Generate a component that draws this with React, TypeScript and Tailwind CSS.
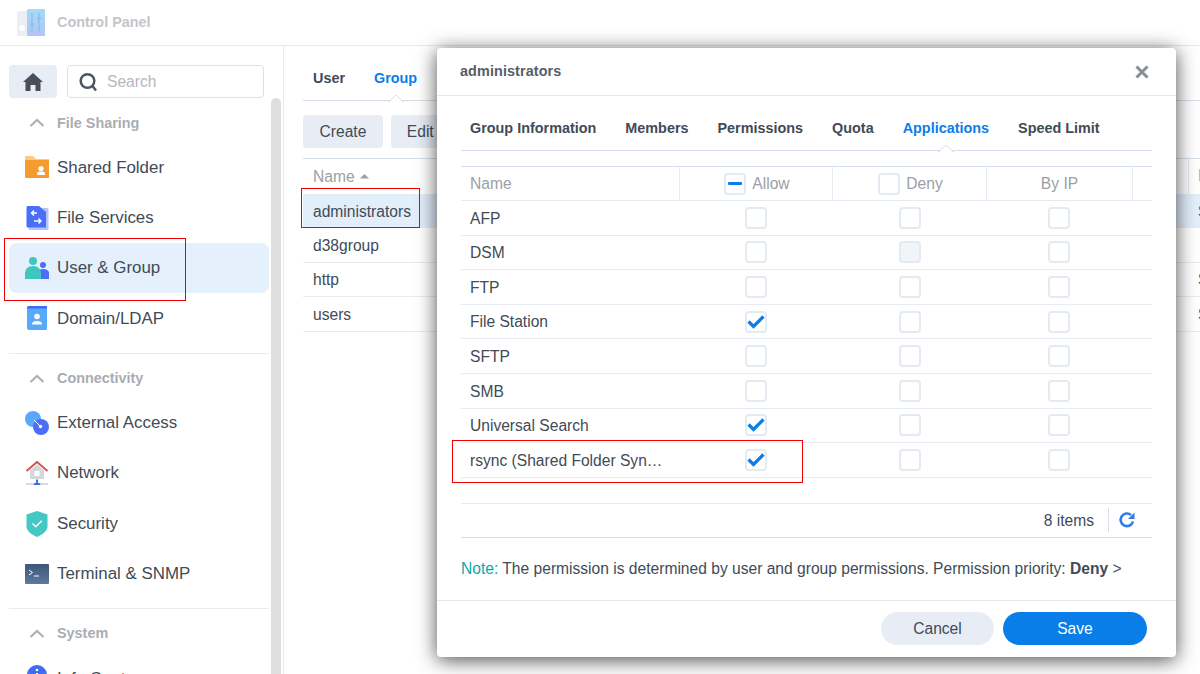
import React from 'react';

const font = { fontFamily: '"Liberation Sans", Arial, sans-serif' };

const TabCaret = () => (
  <svg className="absolute bottom-[-1px] left-1/2 -translate-x-1/2" width="16" height="8" viewBox="0 0 16 8">
    <path d="M0 7.5h1L8 1l7 6.5h1V8H0z" fill="#fff" />
    <path d="M0 7.5h1L8 1l7 6.5h1" fill="none" stroke="#d5dfe9" />
  </svg>
);

const Chevron = () => (
  <svg width="16" height="16" viewBox="0 0 16 16" fill="none" stroke="#adb1b7" strokeWidth="2.2">
    <path d="M1.5 11 8 5l6.5 6" />
  </svg>
);

const FolderIcon = () => (
  <svg width="24" height="24" viewBox="0 0 24 24">
    <path d="M0 2.5C0 1.7.5 1 1.5 1H8l3 3h13v3H0z" fill="#fbc98a" />
    <path d="M0 5h24v18H1a1 1 0 0 1-1-1z" fill="#f59b2f" />
    <circle cx="16" cy="13.5" r="2.6" fill="#fff" />
    <path d="M12 18.5c0-1.4 1.5-2 4-2s4 .6 4 2V20h-8z" fill="#fff" />
  </svg>
);

const FileServicesIcon = () => (
  <svg width="24" height="24" viewBox="0 0 24 24">
    <rect x="3.5" y="2" width="20" height="22" rx="1.5" fill="#b4c4fb" />
    <path d="M1.5 1.5C1.5.7 2 0 3 0h11l7 6v15.5H3a1.5 1.5 0 0 1-1.500-1.500z" fill="#4b6ef8" />
    <path d="M12 7H6.500m2.500-2.500L6.500 7 9 9.500M9 15h7m-2.500-2.500L16 15l-2.500 2.500" stroke="#fff" strokeWidth="1.4" fill="none" />
  </svg>
);

const UsersIcon = () => (
  <svg width="24" height="24" viewBox="0 0 24 24">
    <circle cx="18" cy="9" r="3" fill="#4b6ef8" />
    <path d="M13 23v-6c0-2.500 2-4 5-4s6 1.500 6 4v6z" fill="#4b6ef8" />
    <circle cx="8" cy="5" r="4" fill="#41c6bd" />
    <path d="M0 23v-5c0-5 3-8 8-8s8 3 8 8v5z" fill="#41c6bd" />
  </svg>
);

const DomainIcon = () => (
  <svg width="24" height="24" viewBox="0 0 24 24">
    <path d="M2 1.500C2 .7 2.700 0 3.500 0H22v4H2z" fill="#3f6df0" />
    <path d="M2 2.500h18.500c1 0 1.500.6 1.500 1.500v18.500c0 .9-.6 1.500-1.500 1.500H4a2 2 0 0 1-2-2z" fill="#58a9fb" />
    <circle cx="12" cy="10.500" r="2.800" fill="#fff" />
    <path d="M7 18c0-2 2-3 5-3s5 1 5 3v.5H7z" fill="#fff" />
  </svg>
);

const ExternalIcon = () => (
  <svg width="24" height="24" viewBox="0 0 24 24">
    <circle cx="8" cy="8" r="8" fill="#58a9fb" />
    <circle cx="16" cy="16" r="8" fill="#4b6ef8" />
    <path d="M9 9l6.500 6.500" stroke="#fff" strokeWidth="1" />
    <circle cx="15.500" cy="15.500" r="1.700" fill="#fff" />
  </svg>
);

const NetworkIcon = () => (
  <svg width="24" height="24" viewBox="0 0 24 24">
    <path d="M5 9.500 12 3.500l7 6v8.500H5z" fill="#d5d7da" />
    <path d="M1.500 10 12 1l10.500 9" fill="none" stroke="#d5564e" strokeWidth="2" />
    <rect x="9.500" y="10" width="5" height="5" fill="#fff" />
    <rect x="1" y="22" width="22" height="2" fill="#d9dce0" />
    <path d="M12 18.500V22" stroke="#3f6df0" strokeWidth="2" />
    <path d="M8.500 24l1-2h5l1 2z" fill="#3f6df0" />
  </svg>
);

const ShieldIcon = () => (
  <svg width="24" height="26" viewBox="0 0 24 26">
    <path d="M12 0l10.500 3.500v12c0 4-4.500 8-10.500 10.500C6 23.500 1.500 19.500 1.500 15.500v-12z" fill="#43c8c3" />
    <path d="M7.500 12.500l3.300 3.300 6-6" fill="none" stroke="#fff" strokeWidth="1.500" />
  </svg>
);

const TerminalIcon = () => (
  <svg width="24" height="20" viewBox="0 0 24 20">
    <defs>
      <linearGradient id="term" x1="0" y1="0" x2="0" y2="1">
        <stop offset="0" stopColor="#3d5578" />
        <stop offset="1" stopColor="#5f7a9f" />
      </linearGradient>
    </defs>
    <rect width="24" height="20" rx="1" fill="url(#term)" />
    <path d="M4 6l3.500 2.500L4 11M9 12h5" fill="none" stroke="#fff" strokeWidth="1" />
  </svg>
);

const InfoIcon = () => (
  <svg className="overflow-visible" width="24" height="24" viewBox="0 3 24 24">
    <circle cx="12" cy="12" r="10" fill="#3f6df0" />
    <rect x="11" y="10" width="2" height="7" fill="#fff" />
    <circle cx="12" cy="7" r="1.300" fill="#fff" />
  </svg>
);

const sections = [
  {
    title: 'File Sharing',
    items: [
      { label: 'Shared Folder', icon: <FolderIcon /> },
      { label: 'File Services', icon: <FileServicesIcon /> },
      { label: 'User & Group', icon: <UsersIcon />, active: true },
      { label: 'Domain/LDAP', icon: <DomainIcon /> },
    ],
  },
  {
    title: 'Connectivity',
    items: [
      { label: 'External Access', icon: <ExternalIcon /> },
      { label: 'Network', icon: <NetworkIcon /> },
      { label: 'Security', icon: <ShieldIcon /> },
      { label: 'Terminal & SNMP', icon: <TerminalIcon /> },
    ],
  },
  {
    title: 'System',
    items: [{ label: 'Info Center', icon: <InfoIcon /> }],
  },
];

const groups = [
  { name: 'administrators', desc: 'System default group', selected: true },
  { name: 'd38group', desc: '' },
  { name: 'http', desc: 'System default group' },
  { name: 'users', desc: 'System default group' },
];

const apps = [
  { name: 'AFP' },
  { name: 'DSM', denyDisabled: true },
  { name: 'FTP' },
  { name: 'File Station', allow: true },
  { name: 'SFTP' },
  { name: 'SMB' },
  { name: 'Universal Search', allow: true },
  { name: 'rsync (Shared Folder Sync, LUN Backup)', allow: true },
];

const Checkbox = ({ checked, disabled, mixed }: { checked?: boolean; disabled?: boolean; mixed?: boolean }) => (
  <span
    className={`flex h-[22px] w-[22px] shrink-0 items-center justify-center rounded-[4px] border-2 border-[#e4eaf1] ${
      disabled ? 'bg-[#f1f4f8]' : 'bg-white'
    }`}
  >
    {checked && (
      <svg width="18" height="14" viewBox="0 0 18 14" fill="none" stroke="#0a7ee8" strokeWidth="3.200">
        <path d="M1.500 6.500 6.500 11.500 16.500 1.500" />
      </svg>
    )}
    {mixed && <span className="h-[3px] w-[14px] rounded-[1px] bg-[#0a7ee8]" />}
  </span>
);

const Sidebar = () => (
  <aside className="relative flex h-full w-[284px] shrink-0 flex-col overflow-hidden border-r border-[#e6eaf0]">
    <div className="flex h-[52px] shrink-0 gap-[10px] pl-[9px] pt-[19px]">
      <button className="flex h-[33px] w-[48px] items-center justify-center rounded-[4px] bg-[#e8edf5]">
        <svg width="20" height="18" viewBox="0 0 20 18" fill="#474f59">
          <path d="M10 0 20 9h-2.500v9h-5v-6h-5v6h-5V9H0z" />
        </svg>
      </button>
      <div className="flex h-[33px] w-[197px] items-center gap-[10px] rounded-[4px] border border-[#d8e0ea] pl-[11px]">
        <svg width="18" height="20" viewBox="0 0 18 20" fill="none" stroke="#4d5661" strokeWidth="2.500">
          <circle cx="8.500" cy="9" r="6.800" />
          <path d="M13.500 14 17 18.500" />
        </svg>
        <span className="text-[15.6px] text-[#b4b8be]">Search</span>
      </div>
    </div>
    {sections.map((section, i) => (
      <div key={section.title} className={i > 0 ? 'mt-[9px] mr-[14px] ml-[9px] border-t border-[#e8ecf2]' : 'mr-[14px] ml-[9px]'}>
        <div className="flex h-[44px] items-center gap-[12px] pl-[20px] pt-[6px]">
          <Chevron />
          <span className={`text-[14.4px] font-bold text-[#a9adb3] ${i === 0 ? 'mt-[1px]' : ''}`}>{section.title}</span>
        </div>
        {section.items.map(item => (
          <div
            key={item.label}
            className={`flex h-[50.4px] items-center gap-[8px] rounded-[8px] pl-[16px] text-[16.9px] text-[#414b57] ${
              item.active ? 'bg-[#e4f0fc]' : ''
            }`}
          >
            <span className="flex w-[24px] items-center justify-center">{item.icon}</span>
            {item.label}
          </div>
        ))}
      </div>
    ))}
    <div className="absolute bottom-0 right-[2px] top-[52px] w-[10px] rounded-t-[5px] bg-[#dedede]" />
  </aside>
);

const GroupPage = () => (
  <main className="min-w-0 flex-1 overflow-hidden pl-[19px] pt-[20px] text-[15.6px] text-[#414b57]">
    <div className="flex h-[35px] w-[1000px] gap-[29px] border-b border-[#d5dfe9] pl-[10px] text-[14.4px] font-bold leading-[24px]">
      <span>User</span>
      <span className="relative h-[35px] text-[#0a7ee8]">
        Group
        <TabCaret />
      </span>
    </div>
    <div className="mt-[14px] flex gap-[8px]">
      <button className="h-[33px] rounded-[4px] bg-[#e8edf5] px-[16.500px]">Create</button>
      <button className="h-[33px] rounded-[4px] bg-[#e8edf5] px-[16px]">Edit</button>
    </div>
    <div className="mt-[10px] flex h-[36px] w-[1000px] items-center border-t border-[#d5dfe9] text-[#9aa0a7]">
      <span className="flex flex-1 items-center gap-[5px] pl-[10px]">
        Name
        <svg width="9" height="5" viewBox="0 0 9 5" fill="#9aa0a7">
          <path d="M4.500 0 9 4.500H0z" />
        </svg>
      </span>
      <span className="h-full w-[115px] border-l border-[#e4eaf1] pl-[9px] leading-[34px]">Description</span>
    </div>
    {groups.map(g => (
      <div
        key={g.name}
        className={`flex h-[34.4px] w-[1000px] items-center border-b border-[#e8ecf2] pt-[1px] ${g.selected ? 'bg-[#e3eefb]' : ''}`}
      >
        <span className="flex-1 pl-[10px]">{g.name}</span>
        <span className="w-[115px] whitespace-nowrap pl-[10px]">{g.desc}</span>
      </div>
    ))}
  </main>
);

const GroupDialog = () => (
  <div className="absolute left-[437px] top-[48px] flex h-[609px] w-[739px] flex-col rounded-[4px] bg-white text-[15.6px] text-[#414b57] shadow-[0_3px_20px_rgba(0,0,0,0.7)]">
    <div className="flex h-[48px] shrink-0 items-center justify-between border-b border-[#e4e8ee] pl-[23px] pr-[27px] pt-[1px]">
      <span className="text-[14.4px] font-bold tracking-[0.1px] text-[#565e68]">administrators</span>
      <svg width="14" height="14" viewBox="0 0 14 14" stroke="#888e96" strokeWidth="3">
        <path d="M1.500 1.500l11 11m0-11-11 11" />
      </svg>
    </div>
    <div className="flex flex-1 flex-col px-[24px]">
      <div className="flex h-[55px] shrink-0 gap-[29px] border-b border-[#d5dfe9] pl-[9px] pt-[23px] text-[14.4px] font-bold leading-[18px]">
        <span>Group Information</span>
        <span>Members</span>
        <span>Permissions</span>
        <span>Quota</span>
        <span className="relative h-[32px] text-[#0a7ee8]">
          Applications
          <TabCaret />
        </span>
        <span>Speed Limit</span>
      </div>
      <div className="mt-[15px] grid h-[35px] shrink-0 grid-cols-[219px_153px_154px_146px_19px] border-y border-[#d5dfe9] border-b-[#e4eaf1] text-[#9aa0a7]">
        <span className="border-r border-[#e8ecf2] pl-[9px] leading-[33px]">Name</span>
        <span className="flex items-center justify-center gap-[6px] border-r border-[#e8ecf2] pl-[2px]">
          <Checkbox mixed />
          Allow
        </span>
        <span className="flex items-center justify-center gap-[6px] border-r border-[#e8ecf2] pl-[2px]">
          <Checkbox />
          Deny
        </span>
        <span className="flex items-center justify-center border-r border-[#e8ecf2]">By IP</span>
        <span />
      </div>
      {apps.map(app => (
        <div
          key={app.name}
          className="grid h-[34.6px] shrink-0 grid-cols-[218px_154px_154px_144px_21px] items-center border-b border-[#e8ecf2]"
        >
          <span className="truncate pl-[9px] pr-[16px] pt-[1px]">{app.name}</span>
          <span className="flex justify-center"><Checkbox checked={app.allow} /></span>
          <span className="flex justify-center"><Checkbox disabled={app.denyDisabled} /></span>
          <span className="flex justify-center"><Checkbox /></span>
        </div>
      ))}
      <div className="mt-[25px] flex h-[35px] shrink-0 items-center justify-end border-y border-[#e4eaf1] border-b-[#d5dfe9] pr-[16px]">
        <span className="mr-[-1px]">8 items</span>
        <span className="ml-[15px] mr-[9px] h-[24px] border-l border-[#d5dfe9]" />
        <svg width="18" height="18" viewBox="0 0 18 18" fill="none" stroke="#2f7de8" strokeWidth="2.600">
          <path d="M15 10.500A6.300 6.300 0 1 1 13 4" />
          <path d="M16.500 1.500v6.500h-6.500z" fill="#2f7de8" stroke="none" />
        </svg>
      </div>
      <p className="mt-[21px] whitespace-nowrap leading-[20px]">
        <span className="text-[#0aa8a8]">Note:</span> The permission is determined by user and group permissions. Permission priority: <b>Deny</b> &gt;
      </p>
    </div>
    <div className="flex h-[57px] shrink-0 justify-end gap-[9px] border-t border-[#e4e8ee] pr-[29px] pt-[11px]">
      <button className="h-[33px] w-[113px] rounded-full bg-[#e8edf5]">Cancel</button>
      <button className="h-[33px] w-[144px] rounded-full bg-[#0a7ee8] text-white">Save</button>
    </div>
  </div>
);

const Annotation = ({ className }: { className: string }) => (
  <div className={`absolute border border-[#f00000] ${className}`} />
);

export default function App() {
  return (
    <div className="relative flex h-[674px] w-[1200px] flex-col overflow-hidden bg-white" style={font}>
      <header className="flex h-[46px] shrink-0 items-center gap-[12px] border-b border-[#e6eaf0] pl-[17px]">
        <svg width="28" height="28" viewBox="0 0 28 28">
          <defs>
            <linearGradient id="logo" x1="0" y1="0" x2="0" y2="1">
              <stop offset="0" stopColor="#a5dbf5" />
              <stop offset="1" stopColor="#b3c4f6" />
            </linearGradient>
          </defs>
          <rect y="2" width="14" height="25" rx="2" fill="#eceef2" />
          <circle cx="5" cy="19" r="3" fill="#fff" />
          <rect x="10" width="18" height="27" rx="1" fill="url(#logo)" />
          <path d="M15 4v19M22 4v19" stroke="#8fc2ea" strokeWidth="1.500" />
          <rect x="13" y="14" width="4" height="2.500" fill="#8fc2ea" />
          <rect x="20" y="8" width="4" height="2.500" fill="#8fc2ea" />
        </svg>
        <span className="text-[14.4px] font-bold text-[#c2c5ca]">Control Panel</span>
      </header>
      <div className="flex min-h-0 flex-1">
        <Sidebar />
        <GroupPage />
      </div>
      <GroupDialog />
      <Annotation className="left-[4px] top-[238px] h-[63px] w-[182px]" />
      <Annotation className="left-[301px] top-[188px] h-[40px] w-[119px]" />
      <Annotation className="left-[452px] top-[440px] h-[43px] w-[351px]" />
    </div>
  );
}
